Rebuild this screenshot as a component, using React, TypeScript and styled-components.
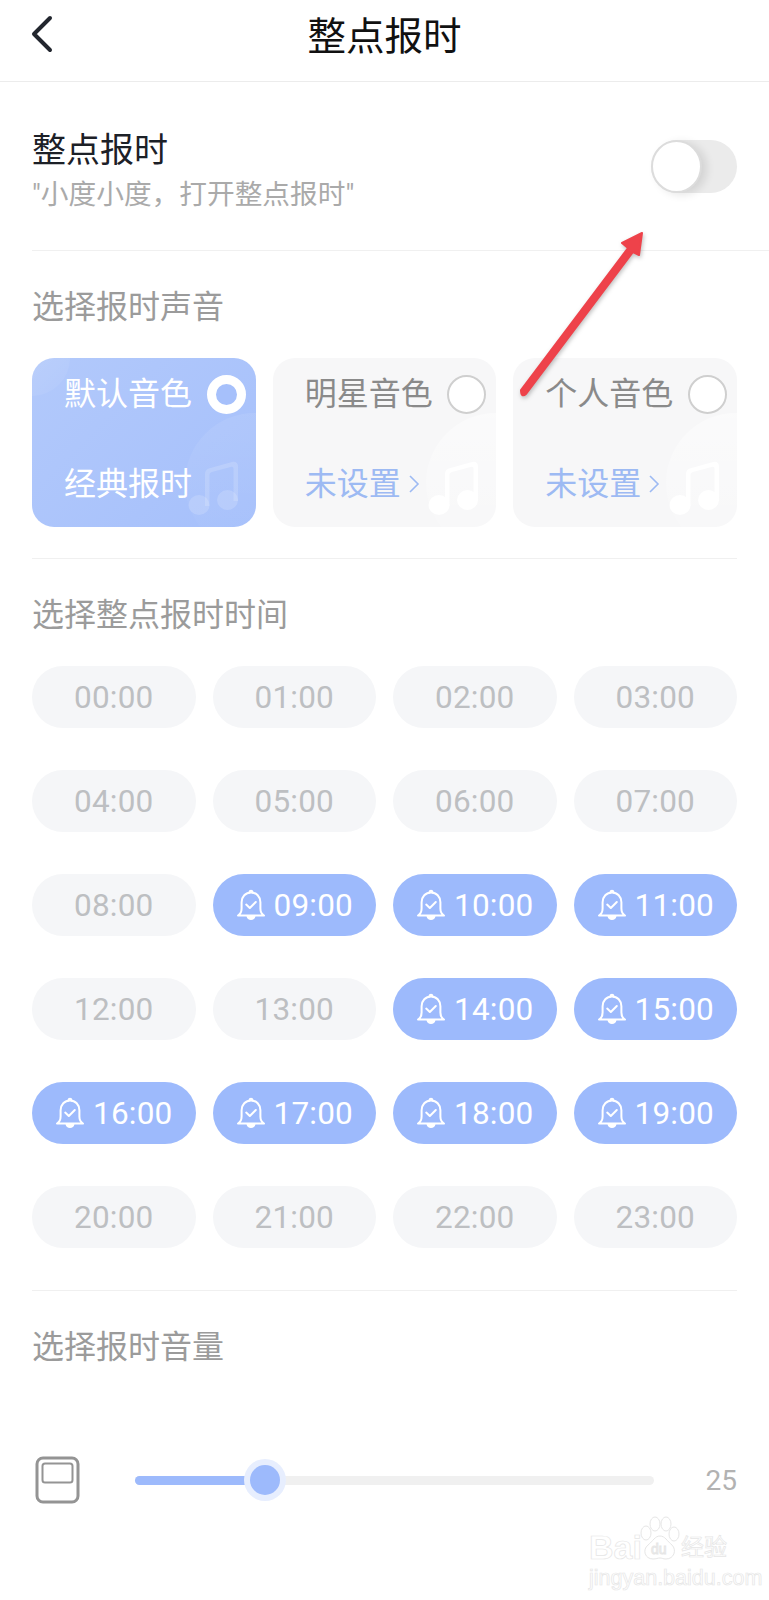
import React from "react";
import styled, { createGlobalStyle } from "styled-components";

const GlobalStyle = createGlobalStyle`
  html, body {
    margin: 0;
    padding: 0;
    background: #ffffff;
  }
  * {
    box-sizing: border-box;
  }
  body {
    font-family: Roboto, "Noto Sans CJK SC", sans-serif;
  }
`;

const Page = styled.div`
  position: relative;
  width: 769px;
  height: 1600px;
  overflow: hidden;
  background: #fff;
`;

const Header = styled.header`
  position: relative;
  display: flex;
  align-items: center;
  justify-content: center;
  height: 82px;
  border-bottom: 1px solid #ececec;
`;

const BackButton = styled.div`
  position: absolute;
  left: 30px;
  top: 15px;
  width: 24px;
  height: 38px;
  color: #22262e;
`;

const HeaderTitle = styled.h1`
  margin: 0 0 8px;
  font-size: 38.5px;
  line-height: 48px;
  font-weight: 400;
  color: #111;
`;

const SwitchWrap = styled.div`
  padding-left: 32px;
`;

const SwitchRow = styled.div`
  display: flex;
  justify-content: space-between;
  align-items: flex-start;
  height: 169px;
  padding: 46px 32px 0 0;
  border-bottom: 1px solid #f0f0f0;
`;

const SwitchTitle = styled.div`
  font-size: 34px;
  line-height: 44px;
  color: #1c2027;
`;

const SwitchHint = styled.div`
  margin-top: 5px;
  font-size: 27.7px;
  line-height: 36px;
  color: #aaaaaa;
`;

const Toggle = styled.div`
  position: relative;
  width: 86px;
  height: 53px;
  margin-top: 12px;
  border-radius: 27px;
  background: #ebebeb;
`;

const ToggleKnob = styled.div`
  position: absolute;
  left: 0;
  top: 0;
  width: 51px;
  height: 53px;
  border-radius: 50%;
  background: #fff;
  border: 2px solid #dcdcdc;
  box-shadow: 5px 2px 8px rgba(0, 0, 0, 0.1);
`;

const Section = styled.section<{ $height: number; $divider?: boolean }>`
  height: ${({ $height }) => $height}px;
  margin: 0 32px;
  border-bottom: ${({ $divider }) => ($divider ? "1px solid #f0f0f0" : "none")};
`;

const SectionTitle = styled.h2`
  margin: 0;
  padding-top: 35px;
  font-size: 32px;
  line-height: 42px;
  font-weight: 400;
  color: #9b9b9b;
`;

const CardRow = styled.div`
  display: grid;
  grid-template-columns: repeat(3, 1fr);
  gap: 17px;
  margin-top: 30px;
`;

const VoiceCard = styled.div<{ $active?: boolean }>`
  position: relative;
  height: 169px;
  padding: 13px 10px 0 32px;
  overflow: hidden;
  border-radius: 22px;
  background: ${({ $active }) =>
    $active ? "linear-gradient(135deg, #b2c9fb 0%, #a6c0fb 100%)" : "#f7f7f8"};

  &::before {
    content: "";
    position: absolute;
    left: 153px;
    top: 55px;
    width: 140px;
    height: 140px;
    border-radius: 50%;
    background: ${({ $active }) =>
      $active
        ? "linear-gradient(180deg, rgba(255, 255, 255, 0.08), rgba(255, 255, 255, 0.01))"
        : "linear-gradient(180deg, rgba(255, 255, 255, 0.45), rgba(255, 255, 255, 0.05))"};
  }

  &::after {
    content: "";
    display: ${({ $active }) => ($active ? "block" : "none")};
    position: absolute;
    left: -38px;
    top: -38px;
    width: 76px;
    height: 76px;
    border-radius: 50%;
    background: linear-gradient(135deg, rgba(255, 255, 255, 0.18), rgba(255, 255, 255, 0.03));
  }
`;

const CardTop = styled.div`
  position: relative;
  z-index: 1;
  display: flex;
  justify-content: space-between;
  align-items: center;
  height: 46px;
`;

const CardName = styled.span<{ $active?: boolean }>`
  font-size: 32px;
  line-height: 46px;
  color: ${({ $active }) => ($active ? "#fff" : "#8a8a8a")};
`;

const Radio = styled.span<{ $active?: boolean }>`
  display: block;
  width: 39px;
  height: 39px;
  border-radius: 50%;
  background: ${({ $active }) => ($active ? "#a6c0fb" : "#fff")};
  border: ${({ $active }) => ($active ? "9px solid #fff" : "2px solid #cfcfcf")};
`;

const CardBottom = styled.div<{ $active?: boolean }>`
  position: relative;
  z-index: 1;
  display: flex;
  align-items: center;
  gap: 7px;
  margin-top: 44px;
  font-size: 32px;
  line-height: 46px;
  color: ${({ $active }) => ($active ? "#fff" : "#9dbaf3")};
`;

const NoteIcon = styled.svg<{ $active?: boolean }>`
  position: absolute;
  right: 18px;
  bottom: 12px;
  width: 50px;
  height: 54px;
  color: ${({ $active }) =>
    $active ? "rgba(255, 255, 255, 0.16)" : "rgba(255, 255, 255, 0.95)"};
`;

const TimeGrid = styled.div`
  display: grid;
  grid-template-columns: repeat(4, 1fr);
  gap: 42px 17px;
  margin-top: 30px;
`;

const TimePill = styled.div<{ $on?: boolean }>`
  display: flex;
  align-items: center;
  justify-content: center;
  gap: 8px;
  height: 62px;
  border-radius: 31px;
  font-size: 31.5px;
  letter-spacing: 0.2px;
  background: ${({ $on }) => ($on ? "#9dbafc" : "#f5f6f8")};
  color: ${({ $on }) => ($on ? "#fff" : "#bdbfc2")};
`;

const VolumeRow = styled.div`
  display: flex;
  align-items: center;
  margin-top: 88px;
  height: 48px;
`;

const SpeakerIcon = styled.svg`
  flex: none;
  width: 45px;
  height: 48px;
  margin-left: 3px;
  color: #949494;
`;

const Track = styled.div`
  position: relative;
  width: 519px;
  height: 9px;
  margin-left: 55px;
  border-radius: 5px;
  background: #f0f0f0;
`;

const TrackFill = styled.div`
  height: 100%;
  border-radius: 5px;
  background: #9dbafc;
`;

const Thumb = styled.div`
  position: absolute;
  top: 50%;
  width: 30px;
  height: 30px;
  border-radius: 50%;
  background: #9dbafc;
  box-shadow: 0 0 0 6px #e7eefe;
  transform: translate(-50%, -50%);
`;

const VolumeValue = styled.div`
  margin-left: auto;
  font-size: 28px;
  color: #b2b2b2;
`;

const Annotation = styled.svg`
  position: absolute;
  left: 510px;
  top: 225px;
  width: 140px;
  height: 180px;
  filter: drop-shadow(1px 2px 2px rgba(0, 0, 0, 0.25));
`;

const Watermark = styled.div`
  position: absolute;
  left: 589px;
  top: 1516px;
  width: 142px;
  color: transparent;
  -webkit-text-stroke: 0.7px #e6e6e6;
`;

const BrandRow = styled.div`
  display: flex;
  align-items: flex-end;
  height: 47px;
`;

const BrandLatin = styled.span`
  font-family: "Liberation Sans", sans-serif;
  font-weight: 700;
  font-size: 34px;
  line-height: 32px;
`;

const BrandPaw = styled.svg`
  flex: none;
  width: 43px;
  height: 47px;
  margin-left: -4px;
  color: #e6e6e6;
`;

const BrandCjk = styled.span`
  margin-left: 0;
  font-size: 23px;
  line-height: 30px;
  white-space: nowrap;
`;

const BrandUrl = styled.div`
  margin-top: 2px;
  font-family: "Liberation Sans", sans-serif;
  font-size: 21.5px;
  line-height: 26px;
  white-space: nowrap;
`;

const BellIcon: React.FC = () => (
  <svg width="30" height="32" viewBox="0 0 30 32" fill="none" stroke="currentColor" strokeWidth="2" strokeLinecap="round" strokeLinejoin="round">
    <path d="M2 26.5c2.6-1.5 3.6-3.5 3.6-7v-6.2C5.6 7.8 9.6 3.4 15 3.4s9.4 4.4 9.4 9.9v6.2c0 3.5 1 5.5 3.6 7z" />
    <path d="M13.4 3.4c.2-1 .8-1.6 1.6-1.6s1.4.6 1.6 1.6" />
    <path d="M11.5 27c.4 1.9 1.8 3 3.5 3s3.1-1.1 3.5-3" fill="currentColor" />
    <path d="M10.2 15.6l3.6 3.4 6-6" />
  </svg>
);

const MusicNote: React.FC<{ active?: boolean }> = ({ active }) => (
  <NoteIcon $active={active} viewBox="0 0 50 54" fill="currentColor">
    <path d="M17 13c0-3 1.500-5 4.500-5.800L44 1c3.500-1 6 .8 6 4v35h-4.500V8c0-1.800-1-2.500-2.800-2L24 11c-1.800.5-2.500 1.500-2.500 3.300V45H17z" />
    <ellipse cx="11" cy="44" rx="10.500" ry="10" />
    <ellipse cx="39.500" cy="39" rx="10.500" ry="10" />
  </NoteIcon>
);

const voices = [
  { name: "默认音色", sub: "经典报时", active: true },
  { name: "明星音色", sub: "未设置", active: false },
  { name: "个人音色", sub: "未设置", active: false },
];

const activeHours = [9, 10, 11, 14, 15, 16, 17, 18, 19];
const hours = Array.from({ length: 24 }, (_, i) => i);

export default function App() {
  const volume = 25;

  return (
    <Page>
      <GlobalStyle />
      <Header>
        <BackButton>
          <svg width="24" height="38" viewBox="0 0 24 38" fill="none" stroke="currentColor" strokeWidth="4" strokeLinecap="round" strokeLinejoin="round">
            <path d="M20 3L4 19l16 16" />
          </svg>
        </BackButton>
        <HeaderTitle>整点报时</HeaderTitle>
      </Header>

      <SwitchWrap>
        <SwitchRow>
          <div>
            <SwitchTitle>整点报时</SwitchTitle>
            <SwitchHint>"小度小度，打开整点报时"</SwitchHint>
          </div>
          <Toggle>
            <ToggleKnob />
          </Toggle>
        </SwitchRow>
      </SwitchWrap>

      <Section $height={308} $divider>
        <SectionTitle>选择报时声音</SectionTitle>
        <CardRow>
          {voices.map((v) => (
            <VoiceCard key={v.name} $active={v.active}>
              <CardTop>
                <CardName $active={v.active}>{v.name}</CardName>
                <Radio $active={v.active} />
              </CardTop>
              <CardBottom $active={v.active}>
                {v.sub}
                {!v.active && (
                  <svg width="12" height="20" viewBox="0 0 12 20" fill="none" stroke="currentColor" strokeWidth="1.6">
                    <path d="M2 2l8 8-8 8" />
                  </svg>
                )}
              </CardBottom>
              <MusicNote active={v.active} />
            </VoiceCard>
          ))}
        </CardRow>
      </Section>

      <Section $height={732} $divider>
        <SectionTitle>选择整点报时时间</SectionTitle>
        <TimeGrid>
          {hours.map((h) => {
            const on = activeHours.includes(h);
            return (
              <TimePill key={h} $on={on}>
                {on && <BellIcon />}
                {String(h).padStart(2, "0")}:00
              </TimePill>
            );
          })}
        </TimeGrid>
      </Section>

      <Section $height={229}>
        <SectionTitle>选择报时音量</SectionTitle>
        <VolumeRow>
          <SpeakerIcon viewBox="0 0 45 48" fill="none" stroke="currentColor">
            <rect x="2" y="2" width="41" height="44" rx="6" strokeWidth="3" />
            <rect x="7.500" y="7.500" width="30" height="19" rx="2.500" strokeWidth="2" />
          </SpeakerIcon>
          <Track>
            <TrackFill style={{ width: `${volume}%` }} />
            <Thumb style={{ left: `${volume}%` }} />
          </Track>
          <VolumeValue>{volume}</VolumeValue>
        </VolumeRow>
      </Section>

      <Annotation viewBox="0 0 140 180">
        <path d="M11 165 L118 23 L112 18 L132 8 L129 30 L123 27 L16 169 Q11 173 11 165 Z" fill="#ee424a" stroke="#ee424a" strokeWidth="2" strokeLinejoin="round" />
      </Annotation>

      <Watermark>
        <BrandRow>
          <BrandLatin>Bai</BrandLatin>
          <BrandPaw viewBox="0 0 43 47" fill="none" stroke="currentColor" strokeWidth="1">
            <ellipse cx="8" cy="17" rx="5" ry="7" />
            <ellipse cx="17" cy="8" rx="5" ry="7" />
            <ellipse cx="28" cy="8" rx="5" ry="7" />
            <ellipse cx="36" cy="18" rx="5" ry="7" />
            <path d="M22 20c5 0 7 5 12 9 5 5 2 14-6 14-3 0-4-1-6-1s-4 1-7 1c-8 0-11-9-5-14 5-4 7-9 12-9z" />
            <text x="13" y="38" fontSize="14" fontFamily="Liberation Sans, sans-serif">du</text>
          </BrandPaw>
          <BrandCjk>经验</BrandCjk>
        </BrandRow>
        <BrandUrl>jingyan.baidu.com</BrandUrl>
      </Watermark>
    </Page>
  );
}
